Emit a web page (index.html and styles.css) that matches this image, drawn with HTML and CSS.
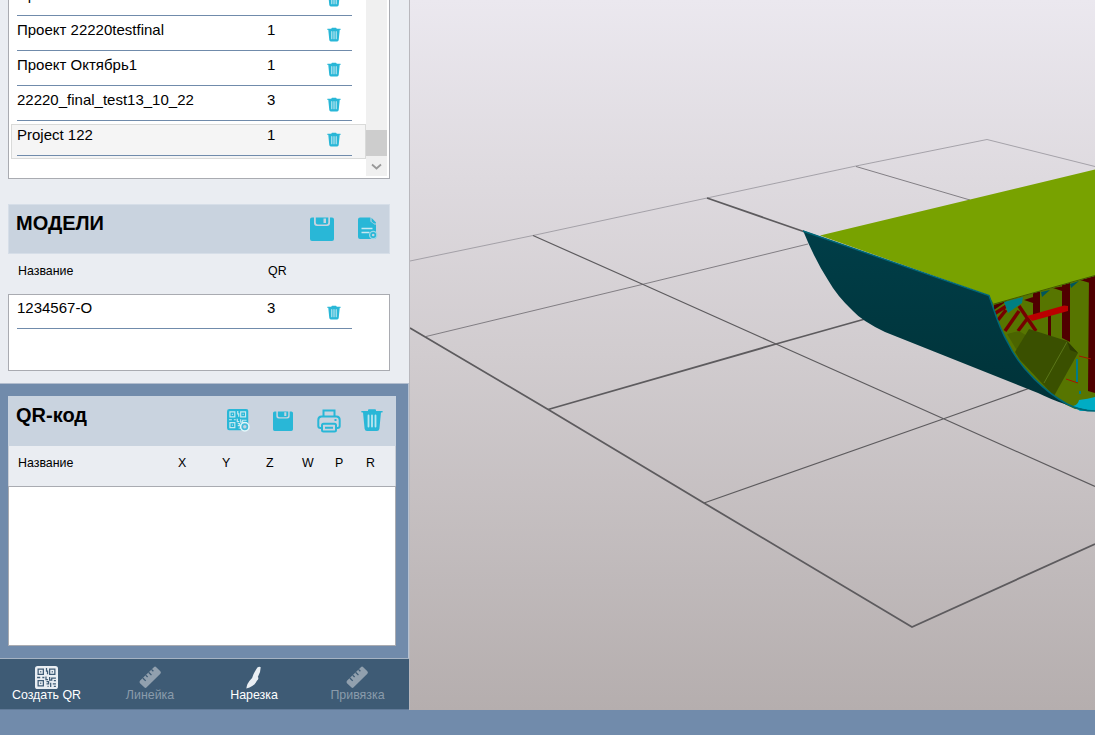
FILE: index.html
```
<!DOCTYPE html>
<html lang="ru">
<head>
<meta charset="utf-8">
<title>QR</title>
<link rel="stylesheet" href="styles.css">
</head>
<body>
<svg class="defs" width="0" height="0">
  <symbol id="trash" viewBox="0 0 22 22">
    <path fill="currentColor" d="M7 2V1.200Q7 .3 8 .3h6q1 0 1 .9V2h6q.8 0 .8.7t-.8.8H20l-1.600 16.200Q18 22 16 22H6q-2 0-2.400-2.300L2 3.500H1Q.2 3.500.2 2.700T1 2z"/>
    <path class="slots" d="M7.500 6.500v11M11 6.500v11M14.500 6.500v11"/>
  </symbol>
  <symbol id="save" viewBox="0 0 24 24">
    <path fill="currentColor" d="M2 .5H4V6Q4 9 7 9H17Q20 9 20 6V.5H22Q24 .5 24 2.500V22Q24 24 22 24H2Q0 24 0 22V2.500Q0 .5 2 .5zM5.800 .5H18.300V5.500Q18.300 7.500 16.300 7.500H7.800Q5.800 7.500 5.800 5.500zM13.500 1.500V6H16V1.500z" fill-rule="evenodd"/>
  </symbol>
  <symbol id="qr" viewBox="0 0 22 22">
    <rect width="22" height="22" rx="2.500" fill="currentColor"/>
    <g class="qr-lines">
      <path d="M3 3h5v5H3zM14 3h5v5h-5zM3 14h5v5H3z"/>
      <path d="M5 5.500h1M16 5.500h1M5 16.500h1M11 2v3h1v3M2 11h3M7 11h2M10.500 10v3h2M14 10.500v3h2v-2h4M18 14h2M11 15h2v2h-2M15 16v4M12 19.500h1M17 17h3M18 19.500h2"/>
    </g>
  </symbol>
  <symbol id="ruler" viewBox="0 0 24 24">
    <path fill="currentColor" d="M1 15.500L15.500 1.200Q16.800 0 18 1.200L22.300 5.500Q23.500 6.700 22.300 8L8 22.300Q6.700 23.500 5.500 22.300L1 18Q0 16.800 1 15.500z"/>
    <path class="ticks" d="M4 12.500l3 3M7 9.500l2 2M10 6.500l3 3M13 3.500l2 2"/>
  </symbol>
</svg>
<main class="app">
  <aside class="sidebar">
    <section class="projects">
      <div class="rows">
        <div class="row"><span class="name">Проект</span><span class="num">1</span><svg class="bin"><use href="#trash"/></svg></div>
        <div class="row"><span class="name">Проект 22220testfinal</span><span class="num">1</span><svg class="bin"><use href="#trash"/></svg></div>
        <div class="row"><span class="name">Проект Октябрь1</span><span class="num">1</span><svg class="bin"><use href="#trash"/></svg></div>
        <div class="row"><span class="name">22220_final_test13_10_22</span><span class="num">3</span><svg class="bin"><use href="#trash"/></svg></div>
        <div class="row selected"><span class="name">Project 122</span><span class="num">1</span><svg class="bin"><use href="#trash"/></svg></div>
      </div>
      <div class="scrollbar">
        <div class="thumb"></div>
        <svg class="arrow" viewBox="0 0 21 20"><path d="M6 8.500l4.500 4L15 8.500"/></svg>
      </div>
    </section>
    <section class="models">
      <header class="bar">
        <h2>МОДЕЛИ</h2>
        <svg class="m-save"><use href="#save"/></svg>
        <svg class="m-doc" viewBox="0 0 20 23">
          <path fill="currentColor" d="M2 .5h10.500V4.500l4 3H18v12.500q0 2-2 2H2q-2 0-2-2V2.500Q0 .5 2 .5zM13.500 .8l4.500 4.700v1h-2l-2.500-2z"/>
          <path class="doc-lines" d="M3.500 11.500h11M3.500 15.500h8"/>
          <circle class="gear" cx="15.200" cy="18" r="3.600"/>
          <circle class="hole" cx="15.200" cy="18" r="1.300"/>
        </svg>
      </header>
      <div class="cols model-cols"><span>Название</span><span>QR</span></div>
      <div class="model-list">
        <div class="row"><span class="name">1234567-О</span><span class="num">3</span><svg class="bin"><use href="#trash"/></svg></div>
      </div>
    </section>
    <section class="codes">
      <header class="bar">
        <h2>QR-код</h2>
        <svg class="c-qr" viewBox="0 0 23 23">
          <use href="#qr" width="21.500" height="21.500"/>
          <circle class="badge" cx="17.800" cy="17.800" r="4.200"/>
          <circle class="hole" cx="17.800" cy="17.800" r="1.700"/>
        </svg>
        <svg class="c-save"><use href="#save"/></svg>
        <svg class="c-print" viewBox="0 0 24 24">
          <path d="M6.500 6.500V1.500h11v5M5.500 19H3.500Q1.300 19 1.300 17V11Q1.300 7.500 4.500 7.500h15q3.200 0 3.200 3.500v6q0 2-2.200 2h-2M6.500 14.700h11q1.500 0 1.500 1.500v4.800q0 1.500-1.500 1.500h-11Q5 22.500 5 21v-4.800q0-1.500 1.500-1.500zM8 18.700h8M17.500 11h2"/>
        </svg>
        <svg class="c-trash"><use href="#trash"/></svg>
      </header>
      <div class="cols code-cols"><span>Название</span><span>X</span><span>Y</span><span>Z</span><span>W</span><span>P</span><span>R</span></div>
      <div class="code-list"></div>
    </section>
    <nav class="tools">
      <button class="tool t-create"><svg><use href="#qr"/></svg>Создать QR</button>
      <button class="tool off t-ruler"><svg><use href="#ruler"/></svg>Линейка</button>
      <button class="tool t-cut"><svg viewBox="0 0 24 24"><path fill="currentColor" d="M15 1.500Q17 0 18.500 1.200Q18.500 6 15.500 11.500Q17 13 14.500 15.500Q12 21 3.500 23.500Q4 18 8.500 13.500L9.500 12.500Q11 7.500 15 1.500z"/></svg>Нарезка</button>
      <button class="tool off t-snap"><svg><use href="#ruler"/></svg>Привязка</button>
    </nav>
  </aside>
  <svg class="scene" viewBox="410 0 685 710" width="685" height="710">
    <defs>
      <linearGradient id="hull" x1="0" y1="0" x2="0" y2="1"><stop offset="0" stop-color="#003e48"/><stop offset="1" stop-color="#003238"/></linearGradient>
    </defs>
    <g class="grid-far"><path d="M410 261L533 235.500L707 198L856 166L987 139.500L1095 166.500"/></g>
    <g class="grid-mid"><path d="M426 336.500L642 284.500L808 244M856 166.500L970 200"/></g>
    <g class="grid-near"><path d="M533 235.500L642 284L776 344L943 418.500L1095 486.500M704 503L943 419L1030 388"/></g>
    <g class="grid-front"><path d="M707 198L805 232M548 409.500L776 344L865 319M410 328L549 410L704 503L912 627L1095 544"/></g>
    <path fill="#577500" d="M989 297L1095 270V411L1075 409C1040 394 1006 358 994 312Z"/>
    <path fill="#500000" d="M1033 291h7v24h-7zM1062 285l8-3v60l-8-4zM1048 315h3v22h-3zM1089 275h6v118l-7-2zM994 305l13-4-13 9zM1024 300l12-4v8zM1053 288l12-2v6zM1080 280l10-3v6z"/>
    <path stroke="#750000" stroke-width="3.500" fill="none" d="M994 314L1008 305M1005 331L1019 311M1018 331L1027 319M1019 306L1036 331M998 320L1006 310"/>
    <path fill="#bb0000" d="M1027 316L1064 305.500L1068 306V311L1032 321z"/>
    <path fill="#007f83" d="M1004 302L1023 297L1022 303L1008 313z"/>
    <path fill="#00565c" d="M1041 292l9-2-8 7zM1070 284l9-3-8 7z"/>
    <path fill="#4b6400" d="M1007 334l12-3 10 6-12 13 8 14z"/>
    <path fill="#3a5000" d="M1029 329L1067 341L1078 353L1054 396L1020 360L1015 352Z"/>
    <path stroke="#5a7618" fill="none" d="M1067 342L1044 383"/>
    <path fill="#2d3d00" d="M1067 341L1078 353L1070 350z"/>
    <path stroke="#a51500" fill="none" d="M1079 356l12 3M1066 379l12 4"/>
    <path stroke="#007b87" stroke-width="2" fill="none" d="M1077 359v23M1080 391v3"/>
    <path fill="#00acc4" d="M1073 406Q1078 405 1079 400Q1088 399 1095 397V411H1080z"/>
    <path fill="#78a200" d="M820 235.500L1095 169.500V276L994 304L988 295z"/>
    <path stroke="#435900" fill="none" d="M994 304L1095 275.500"/>
    <path fill="url(#hull)" d="M803 230.500L989 295.500C995 312 998 326 1008 343C1020 369 1047 393 1067 404C1078 409 1086 411 1095 411C1075 409 1055 401 1038 393L885 332Q862 321 853 311Q837 296 828 280Q815 260 803 230.500z"/>
    <path class="hull-edge" d="M803 231L989 295.500C995 312 998 326 1008 343C1020 369 1047 393 1067 404Q1080 411 1095 411"/>
  </svg>
</main>
</body>
</html>
```
FILE: styles.css
```
*, *::before, *::after { box-sizing: border-box; }
body {
  margin: 0;
  height: 735px;
  overflow: hidden;
  background: #718bab;
  font-family: "Liberation Sans", Arial, sans-serif;
  color: #000;
}
.defs { display: none; }
svg { display: block; flex: none; }
.app { display: flex; height: 710px; }
.sidebar {
  width: 410px;
  height: 710px;
  display: flex;
  flex-direction: column;
  background: #eaedf2;
  border-right: 1px solid #b9b8bd;
}
.scene { background: linear-gradient(#ebe8ef, #d1cccf 50%, #b5aeae); }

.projects {
  display: flex;
  width: 382px;
  height: 179px;
  margin-left: 8px;
  padding: 0 2px 2px;
  border: 1px solid #a9abb1;
  border-top: 0;
  background: #fff;
  overflow: hidden;
}
.rows { width: 355px; margin-top: -19px; }
.row {
  display: grid;
  grid-template-columns: 250px 60px 1fr;
  width: 335px;
  height: 35px;
  padding-top: 5px;
  margin-left: 6px;
  border-bottom: 1px solid #708bab;
  font-size: 15px;
  line-height: 17px;
}
.rows .selected { position: relative; z-index: 0; }
.selected::before {
  content: "";
  position: absolute;
  z-index: -1;
  left: -6px;
  top: 3px;
  width: 355px;
  height: 35px;
  border: 1px solid #d9dad9;
  background: #f5f5f5;
}
.selected::after {
  content: "";
  position: absolute;
  left: 0;
  top: 34px;
  width: 335px;
  height: 1px;
  background: #708bab;
}
.bin { width: 14px; height: 15px; margin-top: 6px; color: #29b7d7; }
.slots { stroke: #b9e6f0; stroke-width: 1.800; stroke-linecap: round; }
.scrollbar {
  display: flex;
  flex-direction: column;
  justify-content: flex-end;
  width: 21px;
  background: #f0f0f0;
}
.thumb { height: 26px; background: #cdcdcd; }
.arrow { height: 20px; fill: none; stroke: #999; stroke-width: 1.800; }

.models { margin-top: 26px; height: 179px; padding-left: 8px; }
.bar {
  display: flex;
  width: 382px;
  height: 50px;
  padding-left: 8px;
  background: #c9d3df;
  color: #29b7d7;
}
.models .bar { border: 1px solid #d6dee8; margin-top: -1px; padding-left: 7px; }
h2 { margin: 7px 0 0; font-size: 20px; line-height: 23px; color: #000; }
.models h2 { width: 294px; }
.codes h2 { width: 211px; }
.m-save { width: 24px; height: 24px; margin: 12px 24px 0 0; }
.m-doc { width: 20px; height: 23px; margin-top: 12px; }
.doc-lines { stroke: #c9e8f1; stroke-width: 1.500; }
.gear { fill: #29b7d7; stroke: #9ad8e7; stroke-width: 1.300; }
.hole { fill: #c9d3df; }
.cols { display: grid; align-items: center; font-size: 12.400px; line-height: 14px; }
.model-cols { height: 34px; padding-left: 10px; grid-template-columns: 250px 1fr; }
.model-list {
  width: 382px;
  height: 77px;
  margin-top: 6px;
  border: 1px solid #a9abb1;
  background: #fff;
}
.model-list .row { margin-left: 8px; height: 34px; padding-top: 4px; }

.codes {
  height: 275px;
  margin-top: -1px;
  padding: 13px 0 0 8px;
  background: #718bab;
  border-top: 1px solid #b2bdce;
  border-right: 1px solid #b7c2d2;
}
.codes .bar { width: 388px; height: 50px; margin-top: -1px; }
.codes h2 { margin-top: 8px; }
.c-qr { width: 23px; height: 23px; margin: 13px 23px 0 0; }
.qr-lines { fill: none; stroke: var(--cut, #c9e9f1); stroke-width: 1.200; }
.badge { fill: #48bddb; stroke: #e5f7fa; stroke-width: 1.500; }
.c-save { width: 20px; height: 20px; margin: 15px 24px 0 0; }
.c-print { width: 24px; height: 24px; margin: 13px 20px 0 0; fill: none; stroke: #29b7d7; stroke-width: 2; }
.c-trash { width: 22px; height: 22px; margin-top: 13px; }
.code-cols {
  width: 388px;
  height: 40px;
  padding-left: 9px;
  padding-bottom: 7px;
  border: solid #c9ced6;
  border-width: 0 1px;
  background: #eaedf2;
  grid-template-columns: 160px 44px 44px 36px 33px 31px 1fr;
}
.code-list { width: 388px; height: 160px; border: 1px solid #a9abb1; background: #fff; }

.tools {
  display: grid;
  grid-template-columns: 93px 114px 94px 109px;
  width: 409px;
  height: 52px;
  flex: none;
  background: #3e5b75;
  border-top: 1px solid #a6b3c3;
  border-bottom: 1px solid #617a98;
}
.tool {
  display: flex;
  flex-direction: column;
  align-items: center;
  margin: 0;
  padding: 7px 0 0;
  border: 0;
  background: none;
  color: #fff;
  font: 12.400px/14px "Liberation Sans", Arial, sans-serif;
}
.tool svg { width: 23px; height: 23px; margin-bottom: -1px; color: #e9eef3; }
.tool.off { color: #8a9bab; }
.tool.off svg { color: #91a0ae; }
.t-snap { padding-left: 4px; }
.t-create svg { --cut: #3e5b75; }
.ticks { stroke: #3e5b75; stroke-width: 1.400; }

.grid-far, .grid-mid, .grid-near, .grid-front { fill: none; }
.grid-far { stroke: #96939a; stroke-width: .8; }
.grid-mid { stroke: #777479; stroke-width: .9; }
.grid-near { stroke: #5d5b5e; stroke-width: 1.200; }
.grid-front { stroke: #5d5b5e; stroke-width: 1.800; }
.hull-edge { fill: none; stroke: #006879; stroke-width: 1.500; }
```
